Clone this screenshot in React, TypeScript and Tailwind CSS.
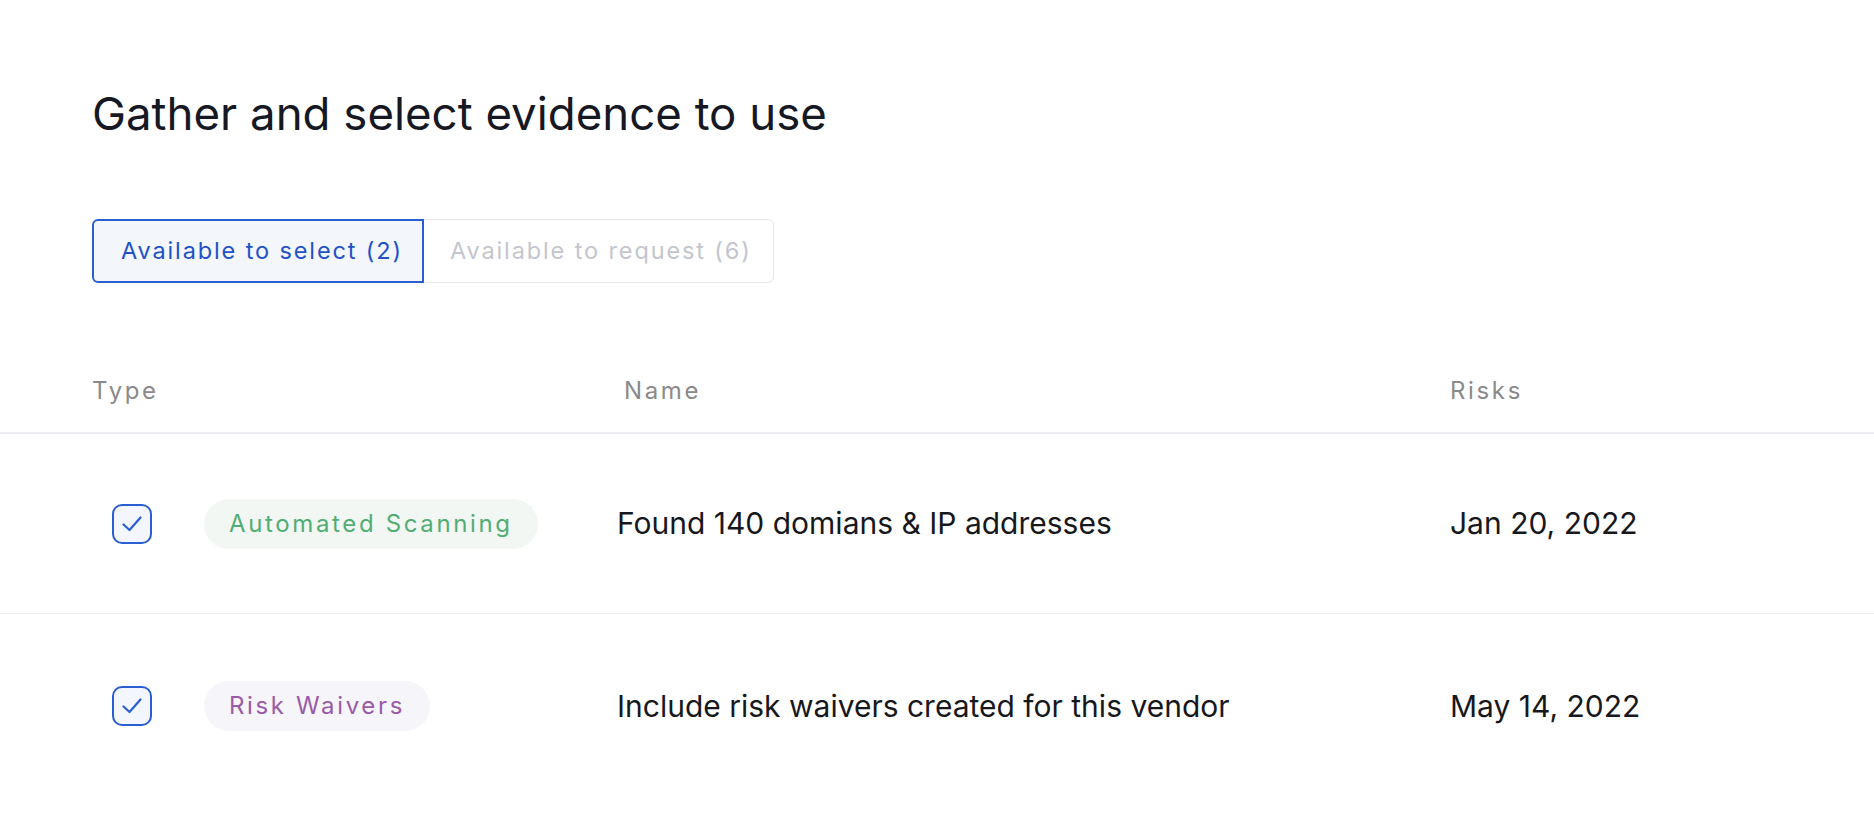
import React from "react";

function Check() {
  return (
    <div className="w-[40px] h-[40px] rounded-[10px] border-2 border-[#2a5fd4] bg-[#f3f6fc] flex items-center justify-center">
      <svg width="22" height="22" viewBox="0 0 22 22" fill="none">
        <path d="M2.5 11.5 L8.5 17 L19.5 4.5" stroke="#2a5fd4" strokeWidth="2.2" strokeLinecap="round" strokeLinejoin="round" />
      </svg>
    </div>
  );
}

const rows = [
  { badge: "Automated Scanning", bText: "text-[#52ad72]", bBg: "bg-[#f2f7f3]", name: "Found 140 domians & IP addresses", date: "Jan 20, 2022", extra: "" },
  { badge: "Risk Waivers", bText: "text-[#9a5aa8]", bBg: "bg-[#f6f5fa]", name: "Include risk waivers created for this vendor", date: "May 14, 2022", extra: "pt-[4px]" },
];

export default function App() {
  return (
    <div className="min-h-screen w-full bg-white font-['Inter',sans-serif]">
      <div className="px-[92px] pt-[86px]">
        <h1 className="text-[45.6px] leading-[56px] text-[#161823] font-normal">Gather and select evidence to use</h1>
        <div className="mt-[77px] flex h-[64px]">
          <div className="w-[332px] h-full flex items-center pl-[27px] rounded-l-[6px] border-2 border-[#2a5fd4] bg-[#f3f6fb] text-[23.5px] tracking-[0.08em] text-[#1f52c6]">
            Available to select (2)
          </div>
          <div className="w-[350px] h-full flex items-center pl-[26px] rounded-r-[6px] border border-l-0 border-[#e6e8ed] text-[23.5px] tracking-[0.08em] text-[#c3c6cd]">
            Available to request (6)
          </div>
        </div>
      </div>
      <div className="mt-[67px]">
        <div className="grid grid-cols-[617px_833px_1fr] h-[84px] items-center border-b-2 border-[#eeeef2] text-[24px] tracking-[0.11em] text-[#8a8a8a]">
          <div className="pl-[92px]">Type</div>
          <div className="pl-[7px]">Name</div>
          <div>Risks</div>
        </div>
        {rows.map((r, i) => (
          <div key={i} className={"grid grid-cols-[617px_833px_1fr] h-[180px] items-center " + r.extra + " " + (i === 0 ? "border-b border-[#eeeef2]" : "")}>
            <div className="pl-[112px] flex items-center gap-[52px]">
              <Check />
              <span className={"inline-flex items-center h-[50px] px-[25px] rounded-full text-[24px] tracking-[0.11em] " + r.bText + " " + r.bBg}>{r.badge}</span>
            </div>
            <div className="text-[30px] text-[#17181c]">{r.name}</div>
            <div className="text-[30px] text-[#17181c]">{r.date}</div>
          </div>
        ))}
      </div>
    </div>
  );
}
